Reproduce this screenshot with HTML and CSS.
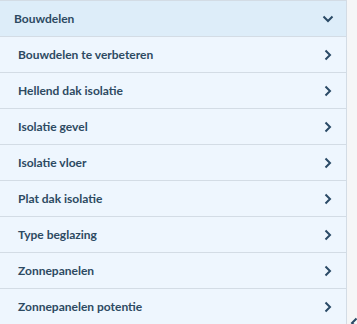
FILE: index.html
```html
<!DOCTYPE html>
<html lang="en">
<head>
    <meta charset="UTF-8">
    <title>Bouwdelen</title>
    <link rel="stylesheet" href="styles.css">
</head>
<body>
    <div class="page">
        <div class="panel">
            <div class="header">
                <span>Bouwdelen</span>
                <svg class="chev" width="12" height="8" viewBox="0 0 12 8"><path d="M1.5 1.5 L6 6 L10.5 1.5" fill="none" stroke="#2a4a66" stroke-width="2"/></svg>
            </div>
            <ul class="list">
                <li><span>Bouwdelen te verbeteren</span><svg width="8" height="12" viewBox="0 0 8 12"><path d="M1.5 1.5 L6 6 L1.5 10.5" fill="none" stroke="#2a4a66" stroke-width="2"/></svg></li>
                <li><span>Hellend dak isolatie</span><svg width="8" height="12" viewBox="0 0 8 12"><path d="M1.5 1.5 L6 6 L1.5 10.5" fill="none" stroke="#2a4a66" stroke-width="2"/></svg></li>
                <li><span>Isolatie gevel</span><svg width="8" height="12" viewBox="0 0 8 12"><path d="M1.5 1.5 L6 6 L1.5 10.5" fill="none" stroke="#2a4a66" stroke-width="2"/></svg></li>
                <li><span>Isolatie vloer</span><svg width="8" height="12" viewBox="0 0 8 12"><path d="M1.5 1.5 L6 6 L1.5 10.5" fill="none" stroke="#2a4a66" stroke-width="2"/></svg></li>
                <li><span>Plat dak isolatie</span><svg width="8" height="12" viewBox="0 0 8 12"><path d="M1.5 1.5 L6 6 L1.5 10.5" fill="none" stroke="#2a4a66" stroke-width="2"/></svg></li>
                <li><span>Type beglazing</span><svg width="8" height="12" viewBox="0 0 8 12"><path d="M1.5 1.5 L6 6 L1.5 10.5" fill="none" stroke="#2a4a66" stroke-width="2"/></svg></li>
                <li><span>Zonnepanelen</span><svg width="8" height="12" viewBox="0 0 8 12"><path d="M1.5 1.5 L6 6 L1.5 10.5" fill="none" stroke="#2a4a66" stroke-width="2"/></svg></li>
                <li><span>Zonnepanelen potentie</span><svg width="8" height="12" viewBox="0 0 8 12"><path d="M1.5 1.5 L6 6 L1.5 10.5" fill="none" stroke="#2a4a66" stroke-width="2"/></svg></li>
            </ul>
        </div>
        <div class="side">
            <svg class="back" width="8" height="12" viewBox="0 0 8 12"><path d="M6.5 1.5 L2 6 L6.5 10.5" fill="none" stroke="#2a4a66" stroke-width="2"/></svg>
        </div>
    </div>
</body>
</html>
```

FILE: styles.css
```css
body{
    margin: 0;
    font-family: Lato, "Open Sans", sans-serif;
    background-color: #f5f6f7;
}
.page{
    display: flex;
    height: 324px;
    overflow: hidden;
}
.panel{
    width: 346px;
    flex: none;
    border-right: 1px solid #d3dce5;
    border-top: 1px solid #d3dce5;
    background-color: #eef6fe;
}
.header{
    height: 35px;
    display: flex;
    align-items: center;
    justify-content: space-between;
    padding: 0 12px 0 14px;
    background-color: #ddedf9;
    border-bottom: 1px solid #d3dce5;
    color: #2d4a62;
    font-weight: bold;
    font-size: 12px;
}
.list{
    list-style: none;
    margin: 0;
    padding: 0;
}
.list li{
    height: 35px;
    display: flex;
    align-items: center;
    justify-content: space-between;
    padding: 0 14px 0 18px;
    border-bottom: 1px solid #d3dce5;
    color: #2d4a62;
    font-weight: bold;
    font-size: 12px;
}
.side{
    flex: 1;
    min-width: 0;
    display: flex;
    align-items: flex-end;
    padding-left: 3px;
}
.back{
    flex: none;
    margin-bottom: -5px;
}
```
